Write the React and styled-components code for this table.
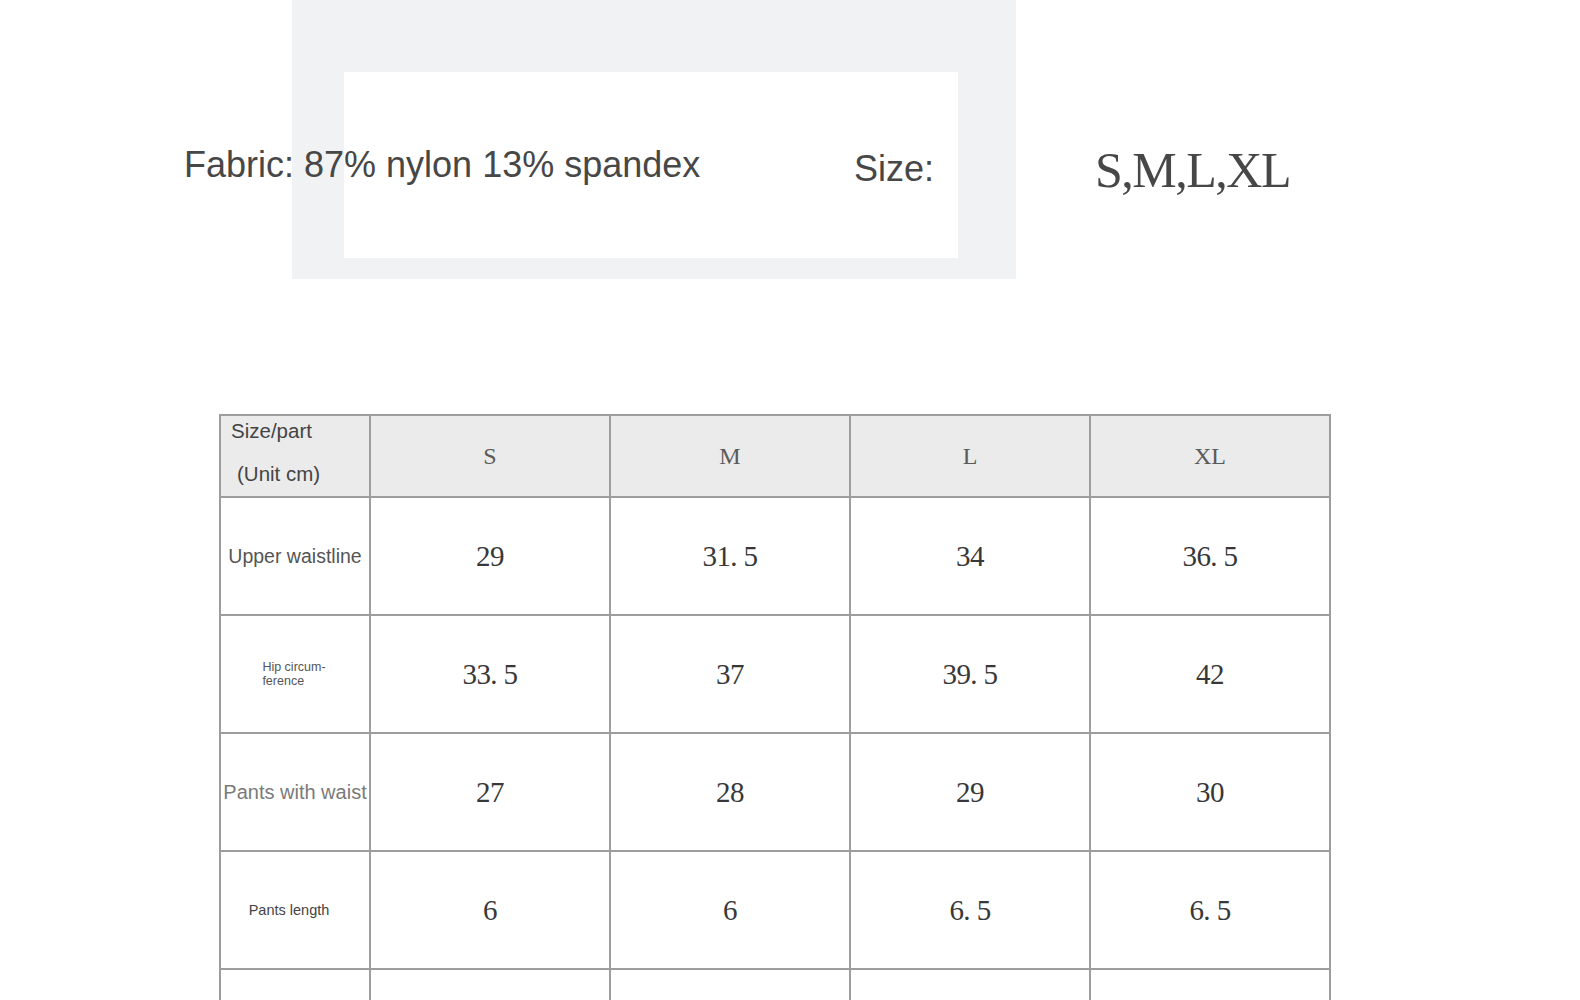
import React from "react";
import styled, { createGlobalStyle } from "styled-components";

const GlobalStyle = createGlobalStyle`
  html, body {
    margin: 0;
    padding: 0;
    background: #ffffff;
    overflow: hidden;
  }
  body {
    font-family: "Liberation Sans", Arial, sans-serif;
  }
`;

const Page = styled.div`
  width: 1580px;
  min-height: 1000px;
`;

const Hero = styled.section`
  display: grid;
`;

const Panel = styled.div`
  grid-area: 1 / 1;
  margin-left: 292px;
  width: 724px;
  height: 279px;
  box-sizing: border-box;
  padding: 72px 58px 21px 52px;
  background: #f1f2f4;
`;

const PanelInset = styled.div`
  height: 100%;
  background: #ffffff;
`;

const Caption = styled.div`
  grid-area: 1 / 1;
  align-self: start;
  display: grid;
  grid-template-columns: 670px 241px auto;
  align-items: start;
  padding: 145px 0 0 184px;
  color: #474747;
`;

const Fabric = styled.div`
  margin-top: 2px;
  font-size: 36px;
  line-height: 1;
  white-space: nowrap;
`;

const SizeLabel = styled.div`
  margin-top: 6px;
  font-size: 36px;
  line-height: 1;
`;

const SizeList = styled.div`
  font-family: "Liberation Serif", "Times New Roman", serif;
  font-size: 50px;
  line-height: 1;
  letter-spacing: -1.5px;
  white-space: nowrap;
`;

const SizeTable = styled.div`
  display: grid;
  grid-template-columns: 148px repeat(4, 238px);
  grid-template-rows: 80px repeat(5, 116px);
  gap: 2px;
  padding: 2px;
  width: max-content;
  margin: 135px 0 0 219px;
  background: #9d9d9d;
`;

const HeadCell = styled.div`
  display: flex;
  align-items: center;
  justify-content: center;
  background: #ebebeb;
  color: #5a5a5a;
  font-family: "Liberation Serif", "Times New Roman", serif;
  font-size: 24px;
`;

const CornerCell = styled.div`
  background: #ebebeb;
  color: #444;
  font-size: 20.5px;
  padding: 3px 0 0 10px;
`;

const CornerLine = styled.div`
  line-height: 24px;
  margin-top: ${(p) => p.$gap || 0}px;
  padding-left: ${(p) => p.$indent || 0}px;
`;

const LabelCell = styled.div`
  display: flex;
  align-items: center;
  justify-content: center;
  padding-right: ${(p) => p.$shift || 0}px;
  background: #ffffff;
  color: ${(p) => p.$color};
  font-size: ${(p) => p.$size}px;
  line-height: ${(p) => p.$lh || "normal"};
  white-space: nowrap;
`;

const LabelBlock = styled.div`
  text-align: left;
`;

const ValueCell = styled.div`
  display: flex;
  align-items: center;
  justify-content: center;
  background: #ffffff;
  color: #383838;
  font-family: "Liberation Serif", "Times New Roman", serif;
  font-size: 29px;
  letter-spacing: -0.6px;
  white-space: pre;
`;

const sizes = ["S", "M", "L", "XL"];

const rows = [
  {
    label: "Upper waistline",
    size: 19.5,
    color: "#555",
    values: ["29", "31. 5", "34", "36. 5"],
  },
  {
    label: (
      <LabelBlock>
        Hip circum-
        <br />
        ference
      </LabelBlock>
    ),
    size: 12.5,
    lh: "14px",
    color: "#555",
    shift: 2,
    values: ["33. 5", "37", "39. 5", "42"],
  },
  {
    label: "Pants with waist",
    size: 20,
    color: "#7a7a7a",
    values: ["27", "28", "29", "30"],
  },
  {
    label: "Pants length",
    size: 14.5,
    color: "#444",
    shift: 12,
    values: ["6", "6", "6. 5", "6. 5"],
  },
  {
    label: "",
    size: 14,
    color: "#444",
    values: ["", "", "", ""],
  },
];

export default function App() {
  return (
    <Page>
      <GlobalStyle />
      <Hero>
        <Panel>
          <PanelInset />
        </Panel>
        <Caption>
          <Fabric>Fabric: 87% nylon 13% spandex</Fabric>
          <SizeLabel>Size:</SizeLabel>
          <SizeList>S,M,L,XL</SizeList>
        </Caption>
      </Hero>

      <SizeTable>
        <CornerCell>
          <CornerLine>Size/part</CornerLine>
          <CornerLine $gap={19} $indent={6}>
            (Unit cm)
          </CornerLine>
        </CornerCell>
        {sizes.map((s) => (
          <HeadCell key={s}>{s}</HeadCell>
        ))}

        {rows.map((row, i) => (
          <React.Fragment key={i}>
            <LabelCell
              $size={row.size}
              $color={row.color}
              $lh={row.lh}
              $shift={row.shift}
            >
              {row.label}
            </LabelCell>
            {row.values.map((v, j) => (
              <ValueCell key={j}>{v}</ValueCell>
            ))}
          </React.Fragment>
        ))}
      </SizeTable>
    </Page>
  );
}
